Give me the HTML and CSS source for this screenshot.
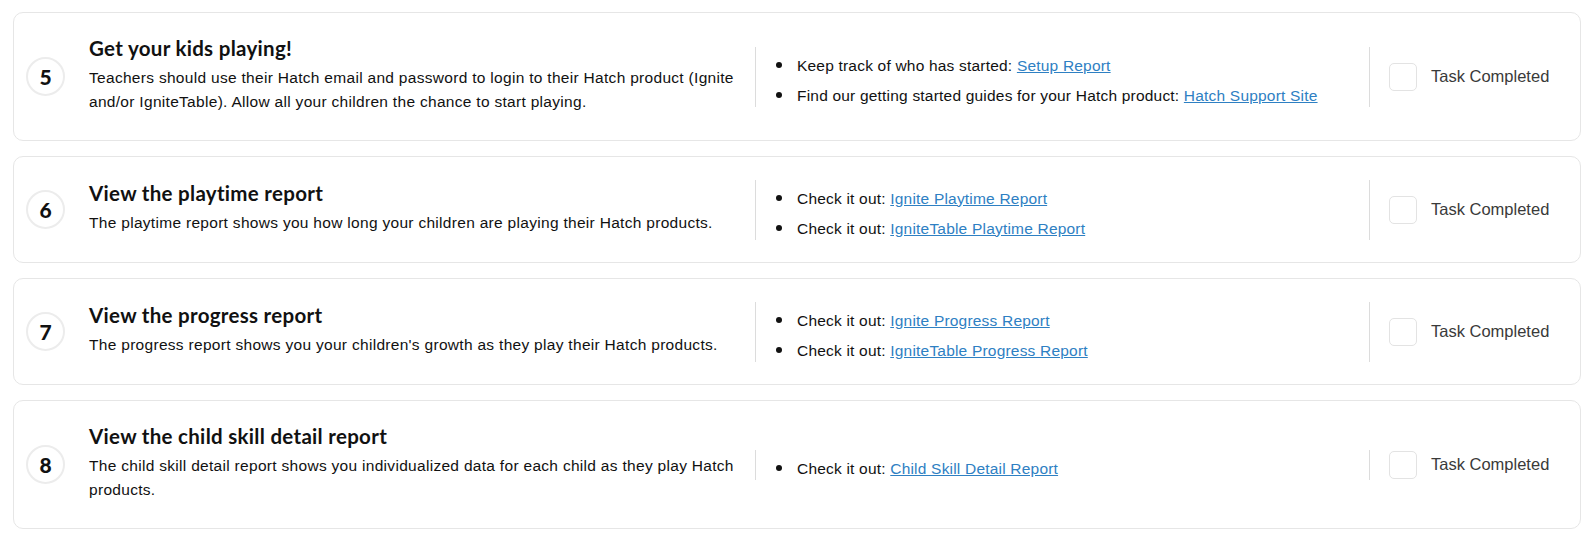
FILE: index.html
```html
<!DOCTYPE html>
<html>
<head>
<meta charset="utf-8">
<link rel="stylesheet" href="styles.css">
</head>
<body>
<div class="list">
  <div class="card">
    <div class="info">
      <div class="num">5</div>
      <div class="desc">
        <h3>Get your kids playing!</h3>
        <p>Teachers should use their Hatch email and password to login to their Hatch product (Ignite and/or IgniteTable). Allow all your children the chance to start playing.</p>
      </div>
    </div>
    <div class="actions">
      <div class="links">
        <ul>
          <li>Keep track of who has started: <a href="#">Setup Report</a></li>
          <li>Find our getting started guides for your Hatch product: <a href="#">Hatch Support Site</a></li>
        </ul>
      </div>
      <div class="done">
        <span class="box"></span>
        <span class="label">Task Completed</span>
      </div>
    </div>
  </div>

  <div class="card">
    <div class="info">
      <div class="num">6</div>
      <div class="desc">
        <h3>View the playtime report</h3>
        <p>The playtime report shows you how long your children are playing their Hatch products.</p>
      </div>
    </div>
    <div class="actions">
      <div class="links">
        <ul>
          <li>Check it out: <a href="#">Ignite Playtime Report</a></li>
          <li>Check it out: <a href="#">IgniteTable Playtime Report</a></li>
        </ul>
      </div>
      <div class="done">
        <span class="box"></span>
        <span class="label">Task Completed</span>
      </div>
    </div>
  </div>

  <div class="card">
    <div class="info">
      <div class="num">7</div>
      <div class="desc">
        <h3>View the progress report</h3>
        <p>The progress report shows you your children's growth as they play their Hatch products.</p>
      </div>
    </div>
    <div class="actions">
      <div class="links">
        <ul>
          <li>Check it out: <a href="#">Ignite Progress Report</a></li>
          <li>Check it out: <a href="#">IgniteTable Progress Report</a></li>
        </ul>
      </div>
      <div class="done">
        <span class="box"></span>
        <span class="label">Task Completed</span>
      </div>
    </div>
  </div>

  <div class="card">
    <div class="info">
      <div class="num">8</div>
      <div class="desc">
        <h3>View the child skill detail report</h3>
        <p>The child skill detail report shows you individualized data for each child as they play Hatch products.</p>
      </div>
    </div>
    <div class="actions">
      <div class="links">
        <ul>
          <li>Check it out: <a href="#">Child Skill Detail Report</a></li>
        </ul>
      </div>
      <div class="done">
        <span class="box"></span>
        <span class="label">Task Completed</span>
      </div>
    </div>
  </div>
</div>
</body>
</html>
```

FILE: styles.css
```css
* { box-sizing: border-box; }
body {
  margin: 0;
  padding: 12px 12px 0 13px;
  background: #fff;
  font-family: "Liberation Sans", Arial, sans-serif;
  color: #111;
}
.list {
  display: flex;
  flex-direction: column;
  gap: 15px;
}
.card {
  display: grid;
  grid-template-columns: 729px 1fr;
  align-items: center;
  border: 1.5px solid #e6e6e6;
  border-radius: 10px;
  padding: 22.5px 12px;
}
.info {
  display: flex;
  align-items: center;
  gap: 24px;
  padding-right: 4px;
}
.num {
  flex: none;
  width: 39px;
  height: 39px;
  border: 2px solid #ececec;
  border-radius: 50%;
  display: flex;
  align-items: center;
  justify-content: center;
  font-family: Lato, sans-serif;
  font-weight: 900;
  font-size: 21px;
}
.desc {
  padding-bottom: 4px;
}
.desc h3 {
  margin: 0 0 5px;
  font-family: Lato, sans-serif;
  font-weight: 700;
  font-size: 20.5px;
  letter-spacing: 0.3px;
  line-height: 25px;
}
.desc p {
  margin: 0;
  font-size: 15.5px;
  letter-spacing: 0.3px;
  line-height: 24px;
}
.actions {
  display: grid;
  grid-template-columns: 614px 1fr;
  align-items: stretch;
}
.links {
  border-left: 1px solid #dcdcdc;
}
.links ul {
  margin: 0 0 -4px;
  padding: 4px 0 0;
  list-style: none;
  font-size: 15.5px;
  letter-spacing: 0.2px;
  line-height: 30px;
}
.links li::before {
  content: "";
  display: inline-block;
  width: 6px;
  height: 6px;
  border-radius: 50%;
  background: #111;
  vertical-align: middle;
  margin: 0 15px 2px 20px;
}
.links a {
  color: #2e80c3;
  text-decoration: underline;
}
.done {
  border-left: 1px solid #dcdcdc;
  display: flex;
  align-items: center;
  gap: 14px;
  padding-left: 19px;
}
.box {
  flex: none;
  width: 28px;
  height: 28px;
  border: 1.5px solid #e3e3e3;
  border-radius: 5px;
}
.label {
  font-size: 16.5px;
  color: #3a3a3a;
}
```
